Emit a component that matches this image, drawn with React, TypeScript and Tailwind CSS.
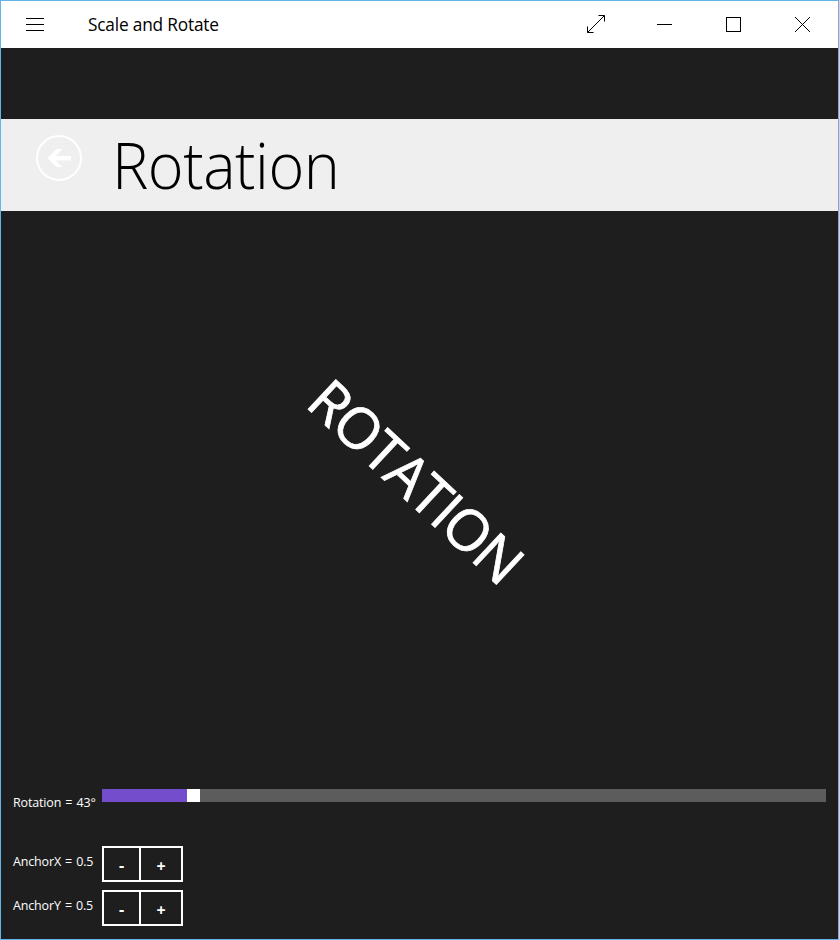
import React from "react";

const sans = "font-['Open_Sans','Noto_Sans',sans-serif]";

function TitleBar() {
  return (
    <header className="flex h-[47px] shrink-0 items-center bg-white text-black">
      <svg className="ml-[25px] h-5 w-[18px]" viewBox="0 0 18 20" shapeRendering="crispEdges">
        <path d="M0 3.5H18M0 9.5H18M0 15.5H18" stroke="#000" />
      </svg>
      <h1 className="ml-[44px] origin-left scale-x-[0.96] pb-[2px] text-[18px] leading-6 whitespace-nowrap tracking-[-0.2px]">Scale and Rotate</h1>
      <div className="mr-[2px] ml-auto flex pb-[2px]">
        <WindowButton>
          <path d="M2.5 18.5 19.5 1.5M13.5 1.5h6v6M2.5 12.5v6h6" stroke="#000" fill="none" />
        </WindowButton>
        <WindowButton>
          <path d="M3 10.5H18" stroke="#000" />
        </WindowButton>
        <WindowButton>
          <rect x="3.5" y="3.5" width="14" height="14" stroke="#000" fill="none" />
        </WindowButton>
        <WindowButton>
          <path d="M3 3 18 18M18 3 3 18" stroke="#000" />
        </WindowButton>
      </div>
    </header>
  );
}

function WindowButton({ children }: { children: React.ReactNode }) {
  return (
    <button className="flex h-[45px] w-[69px] items-center justify-center">
      <svg className="h-5 w-5" viewBox="0 0 20 20" overflow="visible">{children}</svg>
    </button>
  );
}

function Stepper({ label }: { label: string }) {
  return (
    <div className="flex h-9 items-center">
      <span className="w-[89px] shrink-0 pb-[3px] text-[12.5px] whitespace-nowrap tracking-[-0.15px] [word-spacing:1px]">{label}</span>
      <div className="flex h-9 w-[81px] border-2 border-white text-[16px] font-bold">
        <button className="flex w-[37px] items-center justify-center border-r-2 border-white pt-[2px]">-</button>
        <button className="flex flex-1 items-center justify-center pt-[3px]">+</button>
      </div>
    </div>
  );
}

export default function App() {
  return (
    <div className={`flex h-[940px] w-[839px] flex-col overflow-hidden border border-[#62b4ea] bg-[#1e1e1e] text-white ${sans}`}>
      <TitleBar />
      <div className="mt-[71px] flex h-[92px] shrink-0 bg-[#efefef]">
        <svg className="mt-4 ml-[35px] h-[46px] w-[46px]" viewBox="0 0 46 46" fill="none">
          <circle cx="23" cy="23" r="22" stroke="#fff" strokeWidth="2" />
          <path d="M11.5 23.3 20.5 14H26.5L19.5 21H35V25.5H19.5L26.5 32H20.5Z" fill="#fff" />
        </svg>
        <h2 className="ml-[29.5px] origin-left scale-x-[0.955] text-[64px] leading-[91px] font-light tracking-[-0.5px] text-black">Rotation</h2>
      </div>
      <div className="flex flex-1 items-center justify-center pr-[6px] pb-[40px]">
        <span className="rotate-43 text-[57px] leading-none tracking-[-1.9px] [-webkit-text-stroke:0.8px_white]">ROTATION</span>
      </div>
      <div className="flex shrink-0 flex-col px-3 pb-[13px]">
        <div className="flex h-[57px]">
          <span className="w-[89px] shrink-0 pt-[5px] text-[12.5px] whitespace-nowrap tracking-[-0.15px] [word-spacing:1px]">Rotation = 43°</span>
          <div className="flex h-[13px] flex-1 bg-[#5c5c5c]">
            <div className="w-[85px] bg-[#744dcc]" />
            <div className="w-[13px] bg-white" />
          </div>
        </div>
        <div className="flex flex-col gap-2">
          <Stepper label="AnchorX = 0.5" />
          <Stepper label="AnchorY = 0.5" />
        </div>
      </div>
    </div>
  );
}
